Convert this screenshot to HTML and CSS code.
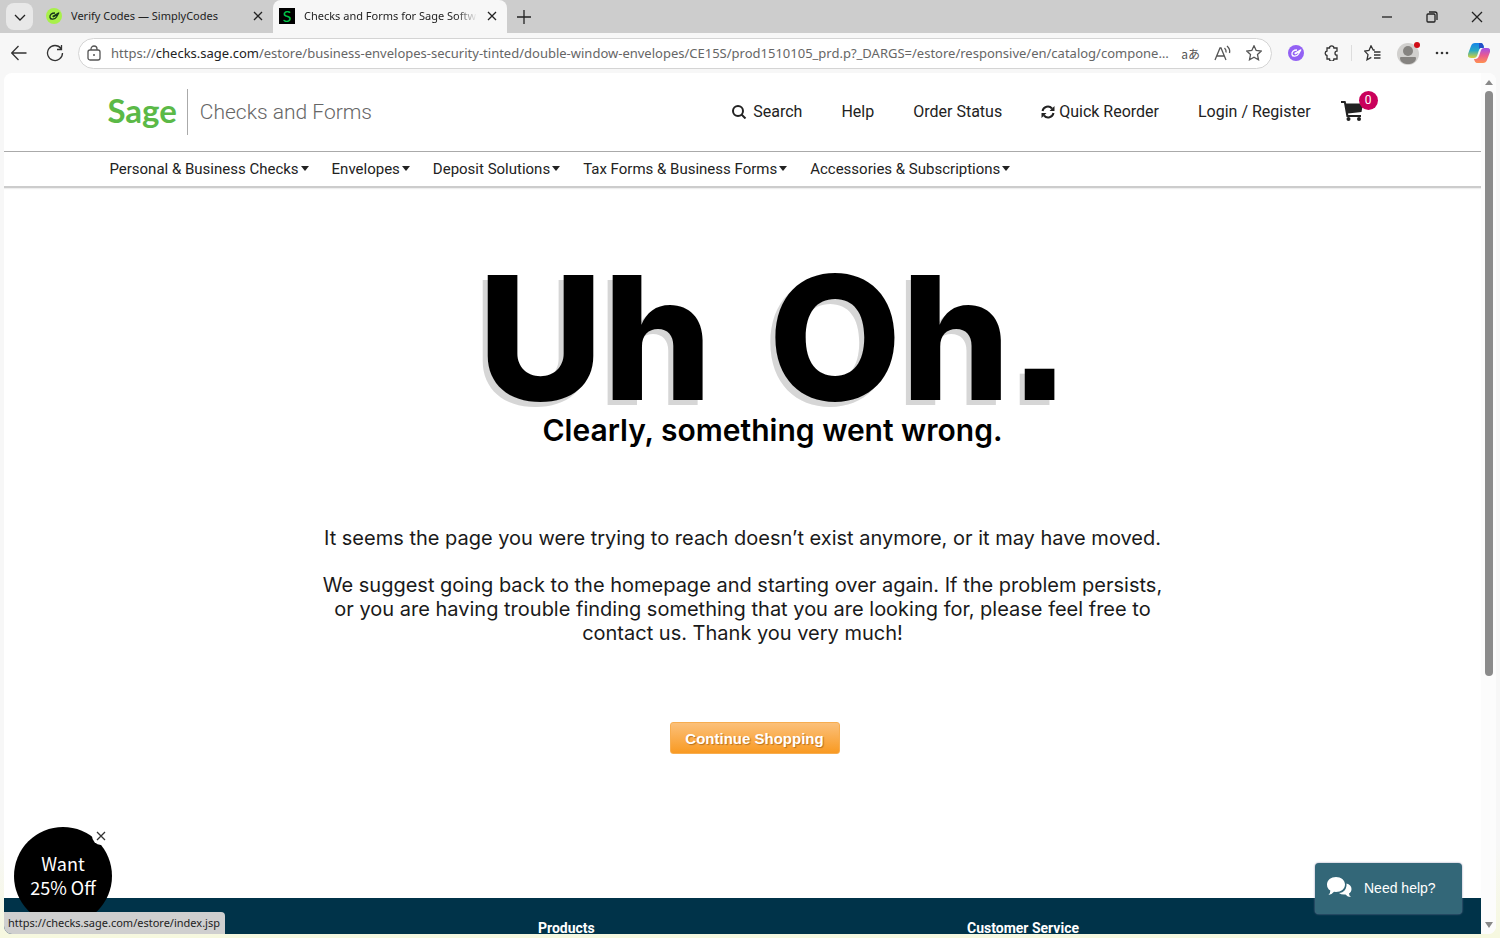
FILE: index.html
```html
<!DOCTYPE html>
<html lang="en">
<head>
    <meta charset="UTF-8">
    <meta name="viewport" content="width=device-width, initial-scale=1.0">
    <title>Checks and Forms for Sage Software</title>
    <link rel="stylesheet" href="styles.css">
</head>
<body>
    <div class="tab-bar">
        <button class="tab-menu" aria-label="Tab actions">
            <svg width="14" height="14" viewBox="0 0 14 14"><path d="M2 5l5 5 5-5"/></svg>
        </button>
        <div class="tab">
            <svg class="favicon" width="16" height="16" viewBox="0 0 16 16">
                <circle cx="8" cy="8" r="8" fill="#a8f04a" stroke="none"/>
                <path d="M9 5C5.500 5 3.500 7 4 9.500s5 2 6.500-.5L13 4.500M6.500 8.500L12.500 5M7 9l4-2" stroke="#17351a"/>
            </svg>
            <span class="tab-title">Verify Codes — SimplyCodes</span>
            <button class="tab-close" aria-label="Close tab">
                <svg width="10" height="10" viewBox="0 0 10 10"><path d="M1 1l8 8M9 1l-8 8"/></svg>
            </button>
        </div>
        <div class="tab active">
            <span class="favicon sage-favicon">S</span>
            <span class="tab-title fade">Checks and Forms for Sage Software</span>
            <button class="tab-close" aria-label="Close tab">
                <svg width="10" height="10" viewBox="0 0 10 10"><path d="M1 1l8 8M9 1l-8 8"/></svg>
            </button>
        </div>
        <button class="new-tab" aria-label="New tab">
            <svg width="14" height="14" viewBox="0 0 14 14"><path d="M7 0v14M0 7h14"/></svg>
        </button>
        <div class="window-buttons">
            <button aria-label="Minimize"><svg width="12" height="12" viewBox="0 0 12 12"><path d="M1 6h10"/></svg></button>
            <button aria-label="Restore"><svg width="12" height="12" viewBox="0 0 12 12"><rect x="1" y="3" width="8" height="8" rx="1"/><path d="M3 1h6q2 0 2 2v6"/></svg></button>
            <button aria-label="Close"><svg width="12" height="12" viewBox="0 0 12 12"><path d="M1 1l10 10M11 1L1 11"/></svg></button>
        </div>
    </div>

    <div class="toolbar">
        <button aria-label="Back">
            <svg width="16" height="16" viewBox="0 0 16 16"><path d="M15.500 8H1M7.500 1L.700 8l6.800 7"/></svg>
        </button>
        <button aria-label="Refresh">
            <svg width="18" height="18" viewBox="0 0 18 18"><path d="M15 4.500A7.500 7.500 0 1 0 16.500 9M15.500 1v4.500H11"/></svg>
        </button>
        <div class="address">
            <svg width="14" height="16" viewBox="0 0 14 16"><rect x="1" y="5" width="12" height="10" rx="2"/><path d="M4 5V4a3 3 0 0 1 6 0v1"/><circle cx="7" cy="10" r="1" fill="#555" stroke="none"/></svg>
            <div class="url">https://<b>checks.sage.com</b>/estore/business-envelopes-security-tinted/double-window-envelopes/CE15S/prod1510105_prd.p?_DARGS=/estore/responsive/en/catalog/components/product.jsp</div>
            <span class="translate">aあ</span>
            <svg width="18" height="16" viewBox="0 0 18 16"><path d="M1 15L6 3h1l5 12M3 11h7M10.500 3q2 2 1.500 4.500M13 1q3.500 3 2.500 7"/></svg>
            <svg width="16" height="16" viewBox="0 0 16 16"><path d="M8 .800l2.200 4.700 5.100.600-3.800 3.500 1 5.200L8 12.300l-4.500 2.500 1-5.200L.700 6.100l5.100-.600z"/></svg>
        </div>
        <div class="tools">
            <svg width="16" height="16" viewBox="0 0 16 16">
                <circle cx="8" cy="8" r="8" fill="#9361f4" stroke="none"/>
                <path d="M9 5C5.500 5 3.500 7 4 9.500s5 2 6.500-.500L13 4.500M6.500 8.500L12.500 5M7 9l4-2" stroke="#fff"/>
            </svg>
            <svg width="16" height="16" viewBox="0 0 16 16"><path d="M3 3h2.500a2.200 2.200 0 0 1 4.400 0H13v3.200a2 2 0 1 0 0 4V14H9.900a2.200 2.200 0 0 1-4.400 0H3v-3.500a2.300 2.300 0 0 1 0-4.500z"/></svg>
            <span class="divider"></span>
            <svg width="17" height="16" viewBox="0 0 17 16"><path d="M10.500 5.500L9.200 5 7 .800 5 5.500l-4.300.600 3.300 3.500-1 5.200 4.300-2.400M10 7h6.500M10 10h6.500M10 13h6.500M9.200 5h1.500"/></svg>
            <svg class="avatar" width="24" height="24" viewBox="0 0 24 24">
                <circle cx="12" cy="13" r="11" fill="#d1d0ce"/>
                <circle cx="12" cy="10" r="5" fill="#858380"/>
                <path d="M4 17q0-1 1-1h14q1 0 1 1c0 4-4 6-8 6s-8-2-8-6z" fill="#858380"/>
                <circle cx="21" cy="4" r="3" fill="#d00d17"/>
            </svg>
            <svg width="14" height="4" viewBox="0 0 14 4"><g fill="#333" stroke="none"><circle cx="2" cy="2" r="1.300"/><circle cx="7" cy="2" r="1.300"/><circle cx="12" cy="2" r="1.300"/></g></svg>
            <svg class="copilot" width="22" height="20" viewBox="0 0 22 20">
                <defs>
                    <linearGradient id="cool" x1="0" y1="0" x2="0" y2="1"><stop offset="0" stop-color="#1584e8"/><stop offset=".500" stop-color="#27a9c4"/><stop offset="1" stop-color="#d8d33a"/></linearGradient>
                    <linearGradient id="warm" x1="0" y1="0" x2="0" y2="1"><stop offset="0" stop-color="#a050e8"/><stop offset=".500" stop-color="#ea5a91"/><stop offset="1" stop-color="#ff9150"/></linearGradient>
                </defs>
                <path d="M7 0h6q2 0 3 4h-2q-2 0-3 3L9 13q-1 2-3 2H3q-4 0-3-4L3 3q1-3 4-3z" fill="url(#cool)"/>
                <path d="M11 0h2q2 0 3 5h-3q-2 0-2 1z" fill="#2450c8"/>
                <path d="M15 20H9q-2 0-3-4h2q2 0 3-3l2-6q1-2 3-2h3q4 0 3 4l-3 8q-1 3-4 3z" fill="url(#warm)"/>
            </svg>
        </div>
    </div>

    <div class="viewport">
        <div class="page">
            <header class="header">
                <div class="container">
                    <a class="logo" href="#">
                        <span class="logo-mark">Sage</span>
                        <span class="logo-name">Checks and Forms</span>
                    </a>
                    <nav class="top-links">
                        <a href="#">
                            <svg width="16" height="16" viewBox="0 0 16 16"><circle cx="7" cy="8" r="5"/><path d="M10.500 11.500l4 4"/></svg>
                            <span>Search</span>
                        </a>
                        <a href="#">Help</a>
                        <a href="#">Order Status</a>
                        <a class="reorder" href="#">
                            <svg width="14" height="16" viewBox="0 0 14 16"><path d="M1.500 8A5.500 5.500 0 0 1 11 5.500M12.500 10A5.500 5.500 0 0 1 3 12.500"/><path d="M13.500 3v5h-5zM.500 15v-5h5z" fill="#222" stroke="none"/></svg>
                            <span>Quick Reorder</span>
                        </a>
                        <a href="#">Login / Register</a>
                        <a class="cart" href="#" aria-label="Cart">
                            <svg width="22" height="20" viewBox="0 0 22 20"><path d="M0 0h4.500l.700 2.500H22L20.500 11 7 12.500l.300 1.500H20v2H5.500L3 2H0z"/><circle cx="7.500" cy="18" r="2"/><circle cx="18" cy="18" r="2"/></svg>
                            <span class="badge">0</span>
                        </a>
                    </nav>
                </div>
            </header>
            <nav class="menu">
                <div class="container">
                    <a href="#">Personal &amp; Business Checks</a>
                    <a href="#">Envelopes</a>
                    <a href="#">Deposit Solutions</a>
                    <a href="#">Tax Forms &amp; Business Forms</a>
                    <a href="#">Accessories &amp; Subscriptions</a>
                </div>
            </nav>

            <main class="error">
                <h1><span>Uh</span><span>Oh<span class="dot">.</span></span></h1>
                <h2>Clearly, something went wrong.</h2>
                <p>It seems the page you were trying to reach doesn’t exist anymore, or it may have moved.</p>
                <p>We suggest going back to the homepage and starting over again. If the problem persists,<br>
                    or you are having trouble finding something that you are looking for, please feel free to<br>
                    contact us. Thank you very much!</p>
                <button class="continue">Continue Shopping</button>
            </main>

            <footer class="footer">
                <h3>Products</h3>
                <h3>Customer Service</h3>
            </footer>
        </div>

        <div class="scrollbar">
            <span class="arrow up"></span>
            <span class="thumb"></span>
            <span class="arrow down"></span>
        </div>

        <button class="offer">Want<br>25% Off</button>
        <button class="offer-close" aria-label="Close offer">
            <svg width="10" height="10" viewBox="0 0 10 10"><path d="M1 1l8 8M9 1l-8 8"/></svg>
        </button>

        <button class="help">
            <svg width="26" height="22" viewBox="0 0 26 22"><path d="M9 0c5 0 9 3 9 7.500S14 15 9 15l-2-.200Q5 17.500 1.500 18 3.500 16 3.300 13.500 0 11.500 0 7.500C0 3 4 0 9 0z"/><path d="M19.500 6.500c3 .600 5 2.700 5 5.500 0 2-1 3.500-2.500 4.500q0 2 2 3.500-3.500 0-5.500-2.500-4 .500-6.500-1.500c5 0 8-4.500 7.500-9.500z"/></svg>
            Need help?
        </button>
        <div class="status">https://checks.sage.com/estore/index.jsp</div>
    </div>
</body>
</html>
```
FILE: styles.css
```css
* {
    box-sizing: border-box;
}
body {
    margin: 0;
    height: 100vh;
    display: flex;
    flex-direction: column;
    overflow: hidden;
    background: linear-gradient(#f7f7f7 90%, #f6f8df);
    font-family: Roboto, "Liberation Sans", sans-serif;
    font-size: 16px;
    color: #222;
}
button {
    padding: 0;
    border: none;
    background: none;
    font: inherit;
    color: inherit;
    cursor: pointer;
}
a {
    color: inherit;
    text-decoration: none;
}
svg {
    display: block;
    flex: none;
    fill: none;
    stroke: #333;
    stroke-width: 1.3;
}

/* Browser tabs */
.tab-bar {
    display: flex;
    align-items: center;
    flex: none;
    height: 33px;
    background: #cdcdcd;
    font: 11px "Noto Sans", sans-serif;
}
.tab-menu {
    display: grid;
    place-items: center;
    width: 27px;
    height: 27px;
    margin-left: 6px;
    border-radius: 8px;
    background: #e8e8e8;
}
.tab {
    display: flex;
    align-items: center;
    width: 240px;
    height: 33px;
    padding: 0 10px 2px 13px;
}
.tab.active {
    width: 234px;
    padding-left: 6px;
    border-radius: 8px 8px 0 0;
    background: #f7f7f7;
}
.favicon {
    margin-right: 9px;
}
.sage-favicon {
    width: 16px;
    height: 16px;
    background: #000;
    color: #00c94a;
    font: 16px/16px Lato, sans-serif;
    text-align: center;
}
.tab-title {
    flex: 1;
    overflow: hidden;
    white-space: nowrap;
}
.fade {
    -webkit-mask-image: linear-gradient(to right, #000 88%, transparent);
    mask-image: linear-gradient(to right, #000 88%, transparent);
}
.tab-close {
    padding: 0 0 0 10px;
}
.tab-bar button svg {
    stroke: #222;
}
.new-tab {
    margin-left: 10px;
}
.window-buttons {
    display: flex;
    gap: 33px;
    margin: 0 17px 0 auto;
}

/* Address bar */
.toolbar {
    display: flex;
    align-items: center;
    flex: none;
    height: 40px;
    padding: 0 10px 0 11px;
}
.toolbar > button {
    width: 18px;
    margin-right: 17px;
}
.toolbar > button + button {
    margin-right: 14px;
}
.address {
    display: flex;
    align-items: center;
    flex: 1;
    min-width: 0;
    height: 31px;
    padding: 0 9px 0 8px;
    border: 1px solid #d4d4d4;
    border-radius: 16px;
    background: #fff;
}
.address svg {
    stroke: #555;
}
.address svg + svg {
    margin-left: 14px;
}
.url {
    flex: 1;
    margin: 0 6px 0 10px;
    overflow: hidden;
    white-space: nowrap;
    text-overflow: ellipsis;
    font: 13px "Noto Sans", sans-serif;
    color: #666;
}
.url b {
    font-weight: normal;
    color: #222;
}
.translate {
    margin-right: 14px;
    font: 12px "Noto Sans CJK JP", sans-serif;
    color: #555;
}
.tools {
    display: flex;
    align-items: center;
    gap: 15px;
    margin-left: 16px;
}
.tools svg:nth-child(2) {
    margin: 0 -4px 0 5px;
}
.divider {
    width: 1px;
    height: 16px;
    margin-right: -3px;
    background: #ddd;
}
.tools .avatar {
    stroke: none;
}
.tools .copilot {
    margin-left: 4px;
    stroke: none;
}

/* Web page */
.viewport {
    position: relative;
    display: flex;
    flex: 1;
    min-height: 0;
    margin: 0 4px 4px;
    border-radius: 8px;
    overflow: hidden;
    background: #fff;
}
.page {
    flex: 1;
    overflow: hidden;
}
.container {
    display: flex;
    align-items: center;
    width: 86%;
    margin: 0 auto;
}
.header {
    border-bottom: 1px solid #aaa;
}
.header .container {
    height: 78px;
    justify-content: space-between;
}
.logo {
    display: flex;
    align-items: center;
}
.logo-mark {
    height: 46px;
    padding-right: 10px;
    border-right: 1px solid #aaa;
    font: bold 33px/42px Lato, sans-serif;
    color: #5bb947;
}
.logo-name {
    padding-left: 12px;
    font-size: 21px;
    font-weight: 300;
    color: #666;
}
.top-links {
    display: flex;
    align-items: center;
    gap: 39px;
    padding-bottom: 2px;
}
.top-links a {
    display: flex;
    align-items: center;
    gap: 6px;
}
.top-links svg {
    stroke: #222;
    stroke-width: 2;
}
.top-links .reorder {
    gap: 4px;
}
.top-links .cart {
    position: relative;
    margin-left: -9px;
    padding-right: 15px;
}
.cart svg {
    fill: #222;
    stroke: none;
}
.badge {
    position: absolute;
    top: -10px;
    right: 0;
    width: 19px;
    height: 19px;
    border-radius: 50%;
    background: #c9005b;
    color: #fff;
    font-size: 12px;
    line-height: 19px;
    text-align: center;
}
.menu {
    border-bottom: 2px solid #ccc;
    box-shadow: 0 1px 1px #eee;
}
.menu .container {
    height: 34px;
    gap: 23px;
    padding-left: 2px;
    font-size: 15px;
}
.menu a::after {
    content: "";
    display: inline-block;
    margin-left: 2px;
    border: 4px solid transparent;
    border-top: 5px solid #222;
    border-bottom: 0;
    vertical-align: 3px;
}
.error {
    display: flex;
    flex-direction: column;
    align-items: center;
    height: 710px;
    padding-top: 77px;
    font-family: Inter, "Noto Sans", sans-serif;
    color: #1a1a1a;
}
.error h1 {
    display: flex;
    gap: 56px;
    margin: 0;
    padding-left: 62px;
    font-size: 172px;
    font-weight: 800;
    line-height: 144px;
    color: #000;
    text-shadow: -5px 5px 0 #d6d6d6;
}
.error h1 .dot {
    font-family: "Liberation Sans", sans-serif;
    font-size: 210px;
    line-height: 0;
}
.error h2 {
    margin: 0 0 75px;
    padding-left: 60px;
    font-size: 30px;
    font-weight: 600;
    line-height: 42px;
    color: #000;
}
.error p {
    margin: 0 0 23px;
    font-size: 20px;
    line-height: 24px;
    text-align: center;
}
.continue {
    width: 170px;
    height: 32px;
    margin: 54px 0 0 24px;
    border: 1px solid #f7ad50;
    border-radius: 3px;
    background: linear-gradient(#fbc07a, #f99a22);
    color: #fff;
    font: bold 15px "Liberation Sans", sans-serif;
    text-shadow: 1px 1px 1px #b87220;
}
.footer {
    display: flex;
    height: 200px;
    padding: 20px 0 0 534px;
    background: #003349;
    color: #fff;
}
.footer h3 {
    width: 429px;
    margin: 0;
    font-size: 14px;
    line-height: 20px;
}
.scrollbar {
    display: flex;
    flex-direction: column;
    align-items: center;
    width: 15px;
    padding: 7px 0 6px;
    background: #fcfcfc;
}
.arrow {
    border: 4px solid transparent;
}
.arrow.up {
    border-top: 0;
    border-bottom: 5px solid #888;
}
.arrow.down {
    margin-top: auto;
    border-top: 6px solid #888;
    border-bottom: 0;
}
.thumb {
    width: 8px;
    height: 69%;
    margin-top: 6px;
    border-radius: 4px;
    background: #8b8b8b;
}

/* Things floating over the page */
.offer {
    position: absolute;
    left: 10px;
    bottom: 9px;
    width: 98px;
    height: 98px;
    padding-bottom: 2px;
    border-radius: 50%;
    background: #000;
    color: #fff;
    font: 18px/24px "Noto Sans CJK SC", sans-serif;
}
.offer-close {
    position: absolute;
    left: 88px;
    bottom: 89px;
    display: grid;
    place-items: center;
    width: 18px;
    height: 18px;
    border-radius: 50%;
    background: #fff;
}
.help {
    position: absolute;
    right: 34px;
    bottom: 20px;
    display: flex;
    align-items: center;
    gap: 11px;
    width: 147px;
    height: 51px;
    padding: 0 0 2px 12px;
    border-radius: 4px;
    background: #336778;
    box-shadow: 0 0 2px #88a;
    color: #fff;
    font: 14px "Liberation Sans", sans-serif;
}
.help svg {
    fill: #fff;
    stroke: none;
}
.status {
    position: absolute;
    left: 0;
    bottom: 0;
    height: 22px;
    padding: 0 5px 0 4px;
    border-radius: 0 4px 0 0;
    background: #cfcfcf;
    font: 11px/21px "Noto Sans", sans-serif;
}
```
